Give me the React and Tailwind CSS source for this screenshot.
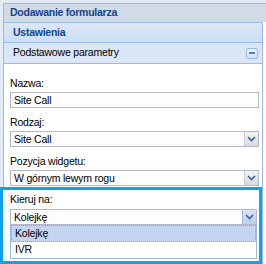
import React from "react";

function Chevron({ color = "#3a5ea8" }) {
  return (
    <svg width="9" height="6" viewBox="0 0 9 6">
      <path d="M1 1 L4.5 4.5 L8 1" fill="none" stroke={color} strokeWidth="1.6" />
    </svg>
  );
}

function Field({ value, select, active }) {
  return (
    <div className="flex h-[16px] border border-[#b5b8c8] bg-gradient-to-b from-[#ffffff] to-[#fbfbfb]">
      <div className="flex-1 pl-[3px] text-[10.5px] leading-[14px] tracking-[-0.2px] text-black">{value}</div>
      {select && (
        <div
          className={
            "flex w-[14px] items-center justify-center border-l " +
            (active
              ? "border-[#99bbe8] bg-gradient-to-b from-[#d7e3f4] to-[#bccfea]"
              : "border-[#c9cbd6] bg-gradient-to-b from-[#f4f4f4] to-[#d9d9d9]")
          }
        >
          <Chevron />
        </div>
      )}
    </div>
  );
}

export default function App() {
  return (
    <div
      className="relative h-[264px] w-[266px] overflow-hidden bg-[#e3ebf6]"
      style={{ fontFamily: "'Liberation Sans', Arial, sans-serif" }}
    >
      <div className="ml-[3px] mt-[3px] flex h-[261px] flex-col border-l border-t border-[#99bbe8] bg-white">
        <div className="flex h-[19px] items-center bg-[#d1dbe6] pl-[6px] text-[10.5px] font-bold tracking-[-0.25px] text-[#15428b]">
          Dodawanie formularza
        </div>
        <div className="mr-[3px] flex flex-1 flex-col border-r border-[#99bbe8]">
          <div className="flex h-[21px] items-center border-y border-[#99bbe8] bg-gradient-to-b from-[#dae7f6] to-[#cddef3] pl-[9px] text-[10.5px] font-bold tracking-[-0.25px] text-[#15428b]">
            Ustawienia
          </div>
          <div className="flex h-[21px] items-center justify-between border-b border-[#99bbe8] bg-[#dae6f5] pl-[9px] pr-[4px] text-[10.5px] tracking-[-0.2px] text-black">
            <span>Podstawowe parametry</span>
            <div className="flex h-[11px] w-[12px] items-center justify-center rounded-[2px] border border-[#99bbe8] bg-gradient-to-b from-[#f0f5fc] to-[#cfdef2]">
              <div className="h-[2px] w-[6px] bg-[#5b7eb3]" />
            </div>
          </div>
          <div className="flex flex-col pl-[6px] pr-[3px] pt-[12px]">
            <div className="h-[16px] text-[10.5px] leading-[14px] tracking-[-0.2px] text-black">Nazwa:</div>
            <Field value="Site Call" />
            <div className="mt-[7px] h-[16px] text-[10.5px] leading-[14px] tracking-[-0.2px] text-black">Rodzaj:</div>
            <Field value="Site Call" select />
            <div className="mt-[7px] h-[16px] text-[10.5px] leading-[14px] tracking-[-0.2px] text-black">Pozycja widgetu:</div>
            <Field value="W górnym lewym rogu" select />
          </div>
          <div className="-ml-[4px] mt-[1px] flex flex-col border-[3px] border-[#14a0e6] bg-white pb-[2px] pl-[7px] pr-[2px] pt-[2px]">
            <div className="h-[17px] text-[10.5px] leading-[14px] tracking-[-0.2px] text-black">Kieruj na:</div>
            <Field value="Kolejkę" select active />
            <div className="border border-t-0 border-[#99bbe8] bg-white">
              <div className="h-[17px] border border-dotted border-[#7f9fd6] bg-[#c5d5ef] pl-[3px] text-[10.5px] leading-[15px] tracking-[-0.2px] text-black">
                Kolejkę
              </div>
              <div className="h-[16px] pl-[4px] text-[10.5px] leading-[15px] tracking-[-0.2px] text-black">IVR</div>
            </div>
          </div>
        </div>
      </div>
    </div>
  );
}
